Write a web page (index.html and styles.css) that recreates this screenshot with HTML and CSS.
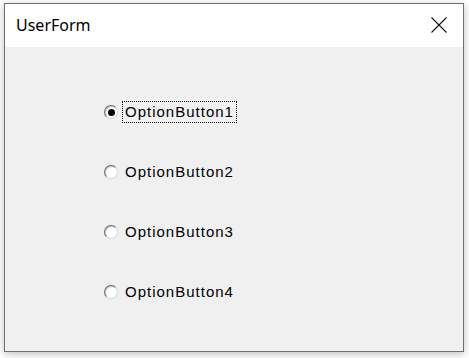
FILE: index.html
```html
<!DOCTYPE html>
<html lang="en">
<head>
    <meta charset="UTF-8">
    <meta name="viewport" content="width=device-width, initial-scale=1.0">
    <title>UserForm</title>
    <link rel="stylesheet" href="styles.css">
</head>
<body>
    <div class="window">
        <div class="title-bar">
            <span class="title">UserForm</span>
            <svg class="close" width="16" height="16" viewBox="0 0 16 16">
                <path d="M0.5 0.5 L15.5 15.5 M15.5 0.5 L0.5 15.5" stroke="#111" stroke-width="1.1" fill="none"/>
            </svg>
        </div>
        <div class="form-body">
            <label class="option">
                <span class="radio checked"></span>
                <span class="option-label focused">OptionButton1</span>
            </label>
            <label class="option">
                <span class="radio"></span>
                <span class="option-label">OptionButton2</span>
            </label>
            <label class="option">
                <span class="radio"></span>
                <span class="option-label">OptionButton3</span>
            </label>
            <label class="option">
                <span class="radio"></span>
                <span class="option-label">OptionButton4</span>
            </label>
        </div>
    </div>
</body>
</html>
```

FILE: styles.css
```css
body {
    margin: 0;
    background-color: #fff;
    width: 469px;
    height: 358px;
    overflow: hidden;
}

.window {
    margin: 3px 0 0 4px;
    width: 460px;
    height: 349px;
    box-sizing: border-box;
    border: 1px solid #6f6f6f;
    background-color: #f0f0f0;
    box-shadow: 0 2px 8px rgba(0, 0, 0, 0.25);
    display: flex;
    flex-direction: column;
}

.title-bar {
    height: 43px;
    background-color: #fff;
    display: flex;
    align-items: center;
    padding: 0 16px 0 11px;
    flex-shrink: 0;
}

.title {
    flex: 1;
    font-family: "Noto Sans", sans-serif;
    font-size: 16px;
    color: #000;
    margin-top: -2px;
}

.close {
    display: block;
    margin-top: -2px;
}

.form-body {
    padding: 54px 0 0 99px;
    display: flex;
    flex-direction: column;
    gap: 38px;
}

.option {
    display: flex;
    align-items: center;
    height: 22px;
}

.radio {
    width: 14px;
    height: 14px;
    box-sizing: border-box;
    border-radius: 50%;
    border: 1px solid #8a8a8a;
    border-top-color: #6a6a6a;
    border-left-color: #6a6a6a;
    border-right-color: #d8d8d8;
    border-bottom-color: #d8d8d8;
    background-color: #fff;
    box-shadow: inset 1px 1px 0 #c8c8c8;
    margin-right: 4px;
    position: relative;
}

.radio.checked::after {
    content: "";
    position: absolute;
    left: 2.5px;
    top: 2.5px;
    width: 7px;
    height: 7px;
    border-radius: 50%;
    background-color: #000;
}

.option-label {
    font-family: "Liberation Sans", sans-serif;
    font-size: 15px;
    letter-spacing: 1px;
    color: #000;
    padding: 1px 2px;
    border: 1px dotted transparent;
    line-height: 18px;
}

.option-label.focused {
    border-color: #000;
}
```
